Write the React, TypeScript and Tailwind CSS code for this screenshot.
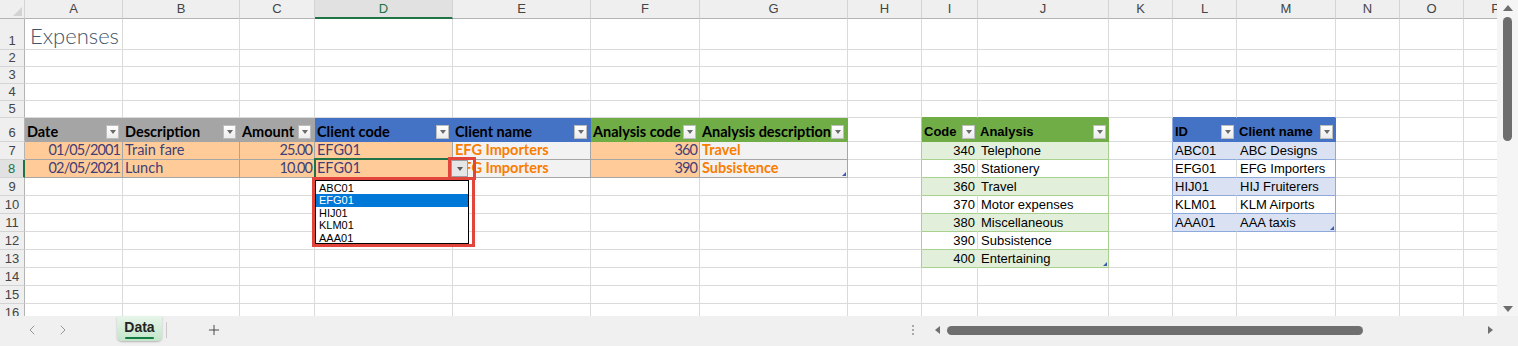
import { ChevronLeft, ChevronRight, Plus } from "lucide-react";
import type { ReactNode } from "react";

const CAL = "[font-family:Lato,sans-serif] text-[14.5px]";
const ARI = "[font-family:'Liberation_Sans',Arial,sans-serif] text-[13px]";

const COLS = ["A", "B", "C", "D", "E", "F", "G", "H", "I", "J", "K", "L", "M", "N", "O", "P"];
const ROWS = Array.from({ length: 16 }, (_, i) => i + 1);

const GRID = "border-r border-b border-[#dadada]";
const COL_HDR =
  "flex items-center justify-center border-r border-b border-r-[#d4d4d4] border-b-[#b4b4b4] bg-[#efefef] text-[13px] text-[#444]";
const SEL_COL =
  "flex items-center justify-center border-r border-b-2 border-r-[#d4d4d4] border-b-[#217346] bg-[#e1e1e1] text-[13px] text-[#217346]";
const ROW_HDR =
  "flex items-end justify-center pb-[1px] border-r border-b border-r-[#b4b4b4] border-b-[#d4d4d4] bg-[#efefef] text-[13px] leading-[15px] text-[#444]";
const SEL_ROW =
  "flex items-end justify-center pb-[1px] border-r-2 border-b border-r-[#217346] border-b-[#d4d4d4] bg-[#e1e1e1] text-[13px] leading-[15px] text-[#217346]";

const MH = `flex items-end justify-between pl-[2px] pr-[3px] pb-[2px] border-r border-b font-bold text-black leading-[15px] whitespace-nowrap ${CAL}`;
const SH = `flex items-end justify-between pl-[2px] pr-[2px] pb-[2px] border-r border-b font-bold text-black leading-[15px] whitespace-nowrap ${ARI}`;
const IN = `flex items-end px-[2px] pb-[1px] border-r border-b border-[#a6a6a6] bg-[#ffcc99] text-[#3f3f76] leading-[16px] whitespace-nowrap overflow-hidden ${CAL}`;
const CALC = `flex items-end px-[2px] pb-[1px] border-r border-b border-[#a6a6a6] bg-[#f2f2f2] text-[#fa7d00] font-bold leading-[16px] whitespace-nowrap overflow-hidden ${CAL}`;

const MAIN_HEAD: Record<string, [string, string]> = {
  A: ["Date", "bg-[#a5a5a5] border-[#a5a5a5]"],
  B: ["Description", "bg-[#a5a5a5] border-[#a5a5a5]"],
  C: ["Amount", "bg-[#a5a5a5] border-[#a5a5a5]"],
  D: ["Client code", "bg-[#4472c4] border-[#4472c4]"],
  E: ["Client name", "bg-[#4472c4] border-[#4472c4]"],
  F: ["Analysis code", "bg-[#70ad47] border-[#70ad47]"],
  G: ["Analysis description", "bg-[#70ad47] border-[#70ad47]"],
};

const MAIN_ROWS: Record<number, Record<string, string>> = {
  7: { A: "01/05/2001", B: "Train fare", C: "25.00", D: "EFG01", E: "EFG Importers", F: "360", G: "Travel" },
  8: { A: "02/05/2021", B: "Lunch", C: "10.00", D: "EFG01", E: "EFG Importers", F: "390", G: "Subsistence" },
};

const CODES = [
  ["340", "Telephone"],
  ["350", "Stationery"],
  ["360", "Travel"],
  ["370", "Motor expenses"],
  ["380", "Miscellaneous"],
  ["390", "Subsistence"],
  ["400", "Entertaining"],
];

const CLIENTS = [
  ["ABC01", "ABC Designs"],
  ["EFG01", "EFG Importers"],
  ["HIJ01", "HIJ Fruiterers"],
  ["KLM01", "KLM Airports"],
  ["AAA01", "AAA taxis"],
];

function Filter() {
  return (
    <span className="flex h-[14px] w-[13px] shrink-0 items-center justify-center border border-[#bdbdbd] bg-linear-to-b from-white to-[#ececec]">
      <span className="h-0 w-0 border-x-[3.5px] border-t-[4px] border-x-transparent border-t-[#6a6a6a]" />
    </span>
  );
}

function Handle() {
  return (
    <span className="absolute bottom-[1px] right-[1px] h-0 w-0 border-b-[4px] border-l-[4px] border-b-[#3b5cab] border-l-transparent" />
  );
}

function cellAt(c: string, r: number): { cls: string; node?: ReactNode } {
  if (r === 1 && c === "A")
    return {
      cls: `${GRID} flex items-end pl-[5px] pb-[1px] whitespace-nowrap`,
      node: (
        <span className="[font-family:Lato,sans-serif] text-[22px] font-light leading-[24px] text-[#44546a]">
          Expenses
        </span>
      ),
    };

  if (r === 6 && MAIN_HEAD[c]) {
    const [label, tone] = MAIN_HEAD[c];
    return {
      cls: `${MH} ${tone}`,
      node: (
        <>
          <span>{label}</span>
          <Filter />
        </>
      ),
    };
  }

  if ((r === 7 || r === 8) && MAIN_ROWS[r][c]) {
    const text = MAIN_ROWS[r][c];
    const right = c === "A" || c === "C" || c === "F";
    const calc = c === "E" || c === "G";
    const handle = r === 8 && c === "G";
    return {
      cls: `${calc ? CALC : IN} ${right ? "justify-end tracking-[-0.9px]" : ""} ${handle ? "relative" : ""}`,
      node: (
        <>
          {text}
          {handle && <Handle />}
        </>
      ),
    };
  }

  // Code / Analysis table
  if (r === 5 && (c === "I" || c === "J")) return { cls: "border-r border-b border-r-[#dadada] border-b-[#70ad47]" };
  if (r === 6 && (c === "I" || c === "J"))
    return {
      cls: `${SH} bg-[#70ad47] border-[#70ad47]`,
      node: (
        <>
          <span>{c === "I" ? "Code" : "Analysis"}</span>
          <Filter />
        </>
      ),
    };
  if (r >= 7 && r <= 13 && (c === "I" || c === "J")) {
    const [code, name] = CODES[r - 7];
    const odd = r % 2 === 1;
    if (c === "I")
      return {
        cls: `flex items-end justify-end pr-[2px] pb-[1px] border-r border-b border-b-[#a9d08e] leading-[15px] ${ARI} ${
          odd ? "bg-[#e2efda] border-r-[#e2efda]" : "bg-white border-r-[#dadada]"
        }`,
        node: code,
      };
    return {
      cls: `relative flex items-end pl-[3px] pb-[1px] border-r border-b border-[#a9d08e] leading-[15px] whitespace-nowrap ${ARI} ${
        odd ? "bg-[#e2efda]" : "bg-white"
      }`,
      node: (
        <>
          {name}
          {r === 13 && <Handle />}
        </>
      ),
    };
  }
  if (c === "H" && r >= 6 && r <= 13) return { cls: "border-r border-b border-r-[#a9d08e] border-b-[#dadada]" };

  // ID / Client name table
  if (r === 5 && (c === "L" || c === "M")) return { cls: "border-r border-b border-r-[#dadada] border-b-[#4472c4]" };
  if (r === 6 && (c === "L" || c === "M"))
    return {
      cls: `${SH} bg-[#4472c4] border-[#4472c4]`,
      node: (
        <>
          <span>{c === "L" ? "ID" : "Client name"}</span>
          <Filter />
        </>
      ),
    };
  if (r >= 7 && r <= 11 && (c === "L" || c === "M")) {
    const [id, name] = CLIENTS[r - 7];
    const odd = r % 2 === 1;
    if (c === "L")
      return {
        cls: `flex items-end pl-[2px] pb-[1px] border-r border-b border-b-[#8ea9db] leading-[15px] ${ARI} ${
          odd ? "bg-[#d9e1f2] border-r-[#d9e1f2]" : "bg-white border-r-[#dadada]"
        }`,
        node: id,
      };
    return {
      cls: `relative flex items-end pl-[3px] pb-[1px] border-r border-b border-[#8ea9db] leading-[15px] whitespace-nowrap ${ARI} ${
        odd ? "bg-[#d9e1f2]" : "bg-white"
      }`,
      node: (
        <>
          {name}
          {r === 11 && <Handle />}
        </>
      ),
    };
  }
  if (c === "K" && r >= 6 && r <= 11) return { cls: "border-r border-b border-r-[#8ea9db] border-b-[#dadada]" };

  return { cls: GRID };
}

function Sheet() {
  const cells: ReactNode[] = [
    <div
      key="corner"
      className="flex items-end justify-end border-r border-b border-r-[#d4d4d4] border-b-[#b4b4b4] bg-[#efefef] p-[2px]"
    >
      <svg width="9" height="9" viewBox="0 0 9 9">
        <path d="M9 0V9H0Z" fill="#d3d3d3" />
      </svg>
    </div>,
  ];
  COLS.forEach((c) =>
    cells.push(
      <div key={c} className={c === "D" ? SEL_COL : COL_HDR}>
        {c}
      </div>
    )
  );
  ROWS.forEach((r) => {
    cells.push(
      <div key={`r${r}`} className={r === 8 ? SEL_ROW : ROW_HDR}>
        {r}
      </div>
    );
    COLS.forEach((c) => {
      const spec = cellAt(c, r);
      cells.push(
        <div key={`${c}${r}`} className={spec.cls}>
          {spec.node}
        </div>
      );
    });
  });
  return (
    <div className="grid w-max grid-cols-[25px_98px_117px_75px_138px_138px_109px_148px_74px_56px_131px_64px_64px_99px_64px_64px_64px] grid-rows-[19px_31px_17px_17px_17px_17px_24px_18px_18px_18px_18px_18px_18px_18px_18px_18px_18px]">
      {cells}
    </div>
  );
}

function Dropdown() {
  const items = ["ABC01", "EFG01", "HIJ01", "KLM01", "AAA01"];
  return (
    <>
      {/* active cell */}
      <div className="absolute left-[314px] top-[158px] h-[21px] w-[140px] border-2 border-[#217346]" />
      {/* validation arrow */}
      <div className="absolute left-[451px] top-[160px] flex h-[17px] w-[17px] items-center justify-center border border-[#9d9d9d] bg-[#e6e6e6]">
        <span className="h-0 w-0 border-x-[3.5px] border-t-[4px] border-x-transparent border-t-[#5a5a5a]" />
      </div>
      <div className="absolute left-[448px] top-[157px] h-[23px] w-[28px] border-[3px] border-[#e2453c]" />
      {/* list */}
      <div className="absolute left-[312px] top-[177px] h-[70px] w-[163px] border-[3px] border-[#e2453c]">
        <div className="flex h-[64px] w-[154px] flex-col border border-black bg-white py-[1px]">
          {items.map((it) => (
            <div
              key={it}
              className={`flex h-[12.4px] items-center pl-[3px] text-[11px] ${
                it === "EFG01" ? "bg-[#0078d7] text-white" : "text-black"
              }`}
            >
              {it}
            </div>
          ))}
        </div>
      </div>
    </>
  );
}

function VScroll() {
  return (
    <div className="flex w-[21px] flex-col items-center bg-[#f5f5f5] pt-[5px] pb-[4px]">
      <span className="h-0 w-0 border-x-[5px] border-b-[6px] border-x-transparent border-b-[#6e6e6e]" />
      <div className="mt-[6px] h-[124px] w-[9px] rounded-full bg-[#6e6e6e]" />
      <div className="flex-1" />
      <span className="h-0 w-0 border-x-[5px] border-t-[6px] border-x-transparent border-t-[#6e6e6e]" />
    </div>
  );
}

function BottomBar() {
  return (
    <div className="flex h-[30px] items-start bg-[#f0f0f0]">
      <div className="flex h-[28px] items-center pl-[24px] text-[#8f8f8f]">
        <ChevronLeft size={16} strokeWidth={1.4} />
        <ChevronRight size={16} strokeWidth={1.4} className="ml-[15px]" />
      </div>
      <div className="ml-[46px] flex h-[25px] w-[45px] flex-col items-center rounded-b-[5px] bg-linear-to-b from-[#e6f5e9] to-[#c3e5ca] shadow-[0_1px_2px_rgba(0,0,0,0.25)]">
        <span className="mt-[3px] text-[14px] font-bold leading-[16px] text-[#242424]">Data</span>
        <span className="mt-[2px] h-[2px] w-[29px] rounded-full bg-[#107c41]" />
      </div>
      <div className="ml-[4px] mt-[6px] h-[16px] w-px bg-[#c8c8c8]" />
      <div className="ml-[39px] flex h-[28px] items-center text-[#333]">
        <Plus size={16} strokeWidth={1.3} />
      </div>
      <div className="flex-1" />
      <div className="flex h-[28px] w-[613px] items-center">
        <div className="ml-[7px] flex flex-col gap-[2px]">
          <span className="h-[2px] w-[2px] bg-[#a8a8a8]" />
          <span className="h-[2px] w-[2px] bg-[#a8a8a8]" />
          <span className="h-[2px] w-[2px] bg-[#a8a8a8]" />
        </div>
        <span className="ml-[21px] h-0 w-0 border-y-[4.5px] border-r-[5px] border-y-transparent border-r-[#707070]" />
        <div className="ml-[7px] h-[9px] w-[416px] rounded-full bg-[#6f6f6f]" />
        <span className="ml-[125px] h-0 w-0 border-y-[4.5px] border-l-[5px] border-y-transparent border-l-[#707070]" />
      </div>
    </div>
  );
}

export default function App() {
  return (
    <div className="flex h-[346px] w-[1518px] flex-col overflow-hidden bg-white [font-family:'Liberation_Sans',Arial,sans-serif]">
      <div className="flex h-[316px]">
        <div className="relative flex-1 overflow-hidden">
          <Sheet />
          <Dropdown />
        </div>
        <VScroll />
      </div>
      <BottomBar />
    </div>
  );
}
